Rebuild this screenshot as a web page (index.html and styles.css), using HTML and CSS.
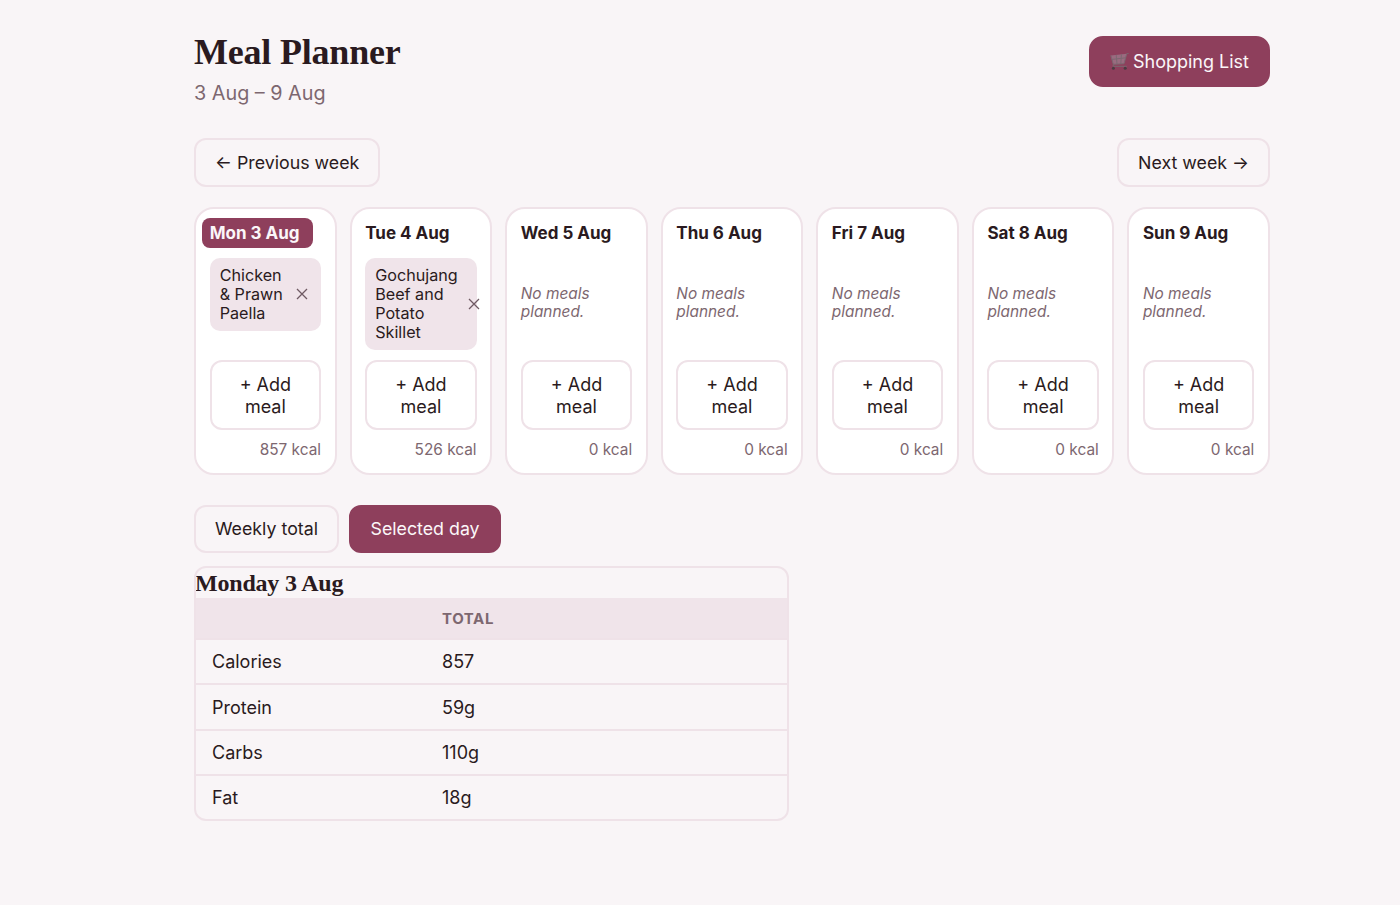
FILE: index.html
```html
<!DOCTYPE html>
<html lang="en">
<head>
<meta charset="utf-8">
<title>Meal Planner</title>
<link rel="stylesheet" href="styles.css">
</head>
<body>
<main class="page">
  <header class="header">
    <div>
      <h1 class="title">Meal Planner</h1>
      <p class="range">3 Aug – 9 Aug</p>
    </div>
    <button class="btn btn-primary shop">
      <svg class="cart" viewBox="0 0 19 17" aria-hidden="true"><path class="cart-fill" d="M0.8 2.4 16.7 0.8 14 10.7 3.3 11.3Z"/><path class="cart-line" d="M18.8 0.2 16.7 0.8 14 10.7 3.3 11.3 0.8 2.4M2 6.4 15.7 4.8M6.2 1.9 7 11.1M11.4 1.3 10.8 10.9M3 13.3H16.8M3.3 11.3 3 13.3"/><circle class="cart-wheel" cx="3.4" cy="15.2" r="1.5"/><circle class="cart-wheel" cx="15.2" cy="15.2" r="1.5"/></svg>
      Shopping List
    </button>
  </header>

  <nav class="week-nav">
    <button class="btn nav-btn">← Previous week</button>
    <button class="btn nav-btn">Next week →</button>
  </nav>

  <section class="days">
    <article class="day">
      <h2 class="day-name today">Mon 3 Aug</h2>
      <div class="meals">
        <div class="meal"><span class="meal-name">Chicken &amp; Prawn Paella</span><button class="remove" aria-label="Remove"><svg viewBox="0 0 12 12"><path d="M1 1 11 11M11 1 1 11"/></svg></button></div>
      </div>
      <button class="add">+ Add meal</button>
      <p class="kcal">857 kcal</p>
    </article>
    <article class="day">
      <h2 class="day-name">Tue 4 Aug</h2>
      <div class="meals">
        <div class="meal"><span class="meal-name">Gochujang Beef and Potato Skillet</span><button class="remove" aria-label="Remove"><svg viewBox="0 0 12 12"><path d="M1 1 11 11M11 1 1 11"/></svg></button></div>
      </div>
      <button class="add">+ Add meal</button>
      <p class="kcal">526 kcal</p>
    </article>
    <article class="day">
      <h2 class="day-name">Wed 5 Aug</h2>
      <div class="meals"><p class="empty">No meals planned.</p></div>
      <button class="add">+ Add meal</button>
      <p class="kcal">0 kcal</p>
    </article>
    <article class="day">
      <h2 class="day-name">Thu 6 Aug</h2>
      <div class="meals"><p class="empty">No meals planned.</p></div>
      <button class="add">+ Add meal</button>
      <p class="kcal">0 kcal</p>
    </article>
    <article class="day">
      <h2 class="day-name">Fri 7 Aug</h2>
      <div class="meals"><p class="empty">No meals planned.</p></div>
      <button class="add">+ Add meal</button>
      <p class="kcal">0 kcal</p>
    </article>
    <article class="day">
      <h2 class="day-name">Sat 8 Aug</h2>
      <div class="meals"><p class="empty">No meals planned.</p></div>
      <button class="add">+ Add meal</button>
      <p class="kcal">0 kcal</p>
    </article>
    <article class="day">
      <h2 class="day-name">Sun 9 Aug</h2>
      <div class="meals"><p class="empty">No meals planned.</p></div>
      <button class="add">+ Add meal</button>
      <p class="kcal">0 kcal</p>
    </article>
  </section>

  <div class="tabs">
    <button class="btn tab">Weekly total</button>
    <button class="btn btn-primary tab">Selected day</button>
  </div>

  <section class="summary">
    <h3 class="summary-title">Monday 3 Aug</h3>
    <table class="table">
      <thead><tr><th></th><th>TOTAL</th></tr></thead>
      <tbody>
        <tr><td>Calories</td><td>857</td></tr>
        <tr><td>Protein</td><td>59g</td></tr>
        <tr><td>Carbs</td><td>110g</td></tr>
        <tr><td>Fat</td><td>18g</td></tr>
      </tbody>
    </table>
  </section>
</main>
</body>
</html>
```

FILE: styles.css
```css
* { box-sizing: border-box; }
html, body { margin: 0; }
body {
  background: #f9f5f7;
  color: #2a1a20;
  font-family: Inter, "Liberation Sans", sans-serif;
  font-size: 16px;
}
.page { width: 1076px; margin: 0 auto 0 194px; padding-top: 28px; }
.header { display: flex; justify-content: space-between; align-items: flex-start; }
.title {
  margin: 0;
  font-family: "Liberation Serif", serif;
  font-size: 36px;
  line-height: 48px;
  font-weight: 700;
  letter-spacing: -0.2px;
}
.range { margin: 5px 0 0; font-size: 19.8px; line-height: 24px; color: #7d6770; }
.btn {
  font-family: inherit;
  font-size: 17.8px;
  line-height: 22px;
  color: #2a1a20;
  background: #f9f5f7;
  border: 2px solid #efe2e8;
  border-radius: 12px;
  padding: 0 19px;
}
.btn-primary { background: #8e3f5c; border-color: #8e3f5c; color: #fbf6f8; padding: 0 19.5px; }
.shop { margin-top: 8px; height: 51px; padding: 0 19px; border-radius: 14px; display: flex; align-items: center; gap: 4px; font-size: 18px; }
.cart { flex: none; width: 19px; height: 17px; }
.cart-fill { fill: #9a6b80; }
.cart-line { fill: none; stroke: #7c6871; stroke-width: 1; }
.cart-wheel { fill: #4a3c42; }
.week-nav { display: flex; justify-content: space-between; margin-top: 33px; }
.nav-btn { height: 49px; }
.days { display: grid; grid-template-columns: repeat(7, minmax(0, 1fr)); gap: 12.8px; margin-top: 20px; }
.day {
  display: flex;
  flex-direction: column;
  height: 268px;
  background: #fff;
  border: 2px solid #efe2e8;
  border-radius: 20px;
  padding: 9px 13.7px 0;
}
.day-name { margin: 0; font-size: 17px; line-height: 30px; font-weight: 700; align-self: flex-start; }
.today { margin-left: -8px; width: 111px; padding-left: 8px; background: #8e3f5c; color: #fbf6f8; border-radius: 8px; white-space: nowrap; }
.meals { height: 92px; margin-top: 10px; }
.meal {
  display: flex;
  align-items: center;
  gap: 7.3px;
  padding: 7.6px 10px;
  background: #f0e4ea;
  border-radius: 10px;
  font-size: 16.15px;
  line-height: 19.2px;
}
.meal-name { flex: 1; }
.remove { flex: none; width: 17.4px; padding: 0 2.7px; border: 0; background: none; display: flex; }
.remove svg { width: 12px; height: 12px; fill: none; stroke: #6f5a63; stroke-width: 1.3; }
.empty { margin: 0; padding-top: 27px; font-size: 15.4px; line-height: 18px; font-style: italic; color: #7d6770; }
.add {
  margin-top: 10px;
  height: 70px;
  font-family: inherit;
  font-size: 18px;
  line-height: 22px;
  color: #2a1a20;
  background: #fff;
  border: 2px solid #efe2e8;
  border-radius: 12px;
  padding: 2px 20px 0;
}
.kcal { margin: 9.5px 0 0; text-align: right; font-size: 15.4px; line-height: 20px; color: #7d6770; }
.tabs { display: flex; gap: 10px; margin-top: 30px; }
.tab { height: 48px; }
.summary {
  width: 595px;
  margin-top: 13px;
  border: 2px solid #efe2e8;
  border-radius: 12px;
  overflow: hidden;
}
.summary-title {
  margin: 0 0 0 -1px;
  font-family: "Liberation Serif", serif;
  font-size: 24px;
  line-height: 30px;
  font-weight: 700;
  letter-spacing: -0.2px;
}
.table { width: 100%; border-collapse: collapse; table-layout: fixed; }
.table th:first-child, .table td:first-child { width: 230px; }
.table th {
  height: 41px;
  padding: 0 16px;
  text-align: left;
  background: #f0e4ea;
  color: #7d6770;
  font-size: 15px;
  font-weight: 700;
  letter-spacing: 0.6px;
  border-bottom: 2px solid #efe2e8;
}
.table td {
  height: 45.4px;
  padding: 0 16px;
  font-size: 18px;
  border-bottom: 2px solid #efe2e8;
}
.table tr:last-child td { height: 43.4px; border-bottom: 0; }
```
